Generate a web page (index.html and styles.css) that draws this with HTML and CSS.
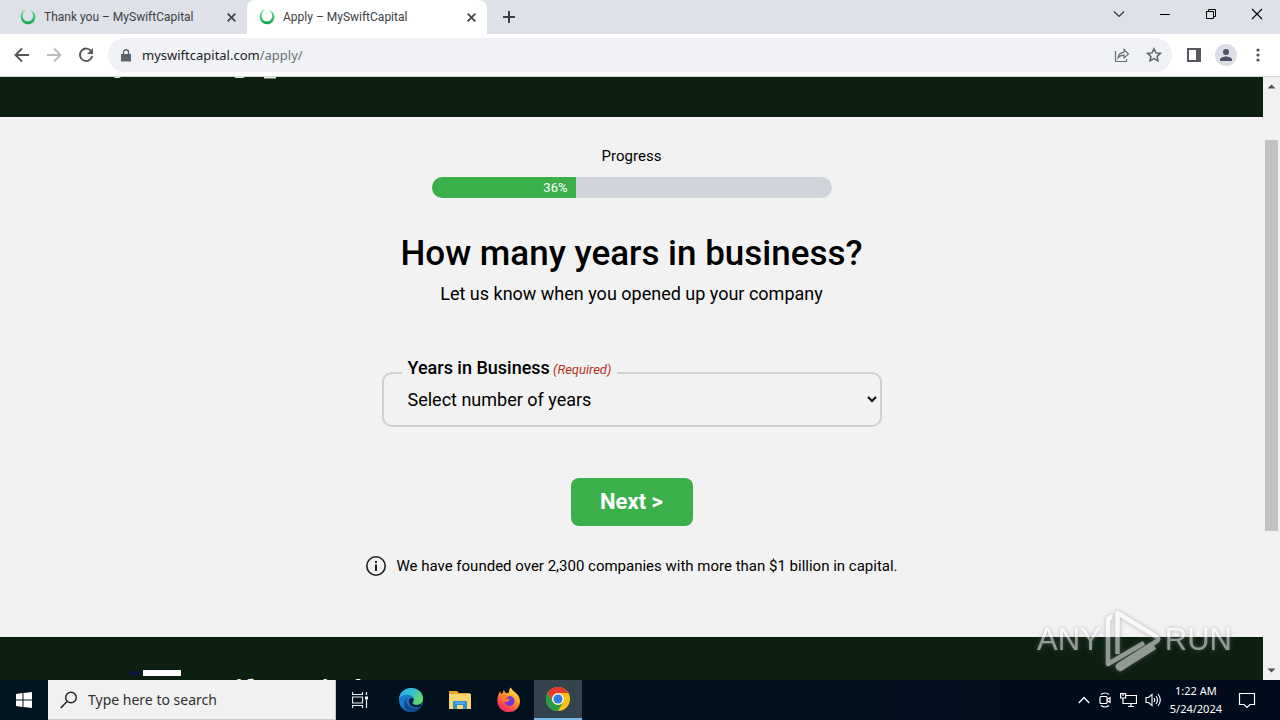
FILE: index.html
```html
<!DOCTYPE html>
<html lang="en">
<head>
<meta charset="utf-8">
<title>Apply – MySwiftCapital</title>
<link rel="stylesheet" href="styles.css">
</head>
<body>
<svg class="defs" aria-hidden="true">
  <defs>
    <linearGradient id="ringFill" x1="0" y1="0" x2="0" y2="1"><stop offset="0" stop-color="#5be58c"/><stop offset="1" stop-color="#17a650"/></linearGradient>
    <symbol id="ring" viewBox="0 0 16 16"><path fill="url(#ringFill)" d="M6 .8C2.800 1.400.6 4.400.7 8c.2 4.200 3.300 7.200 7.300 7.200 4.200 0 7.400-3.200 7.400-7.300 0-3.400-2.200-6.200-5.600-7 2.300 1.600 3.600 3.800 3.400 6.400-.3 3-2.500 5-5.300 5-3 0-5.100-2-5.300-4.800C2.400 4.700 3.600 2.300 6 .8z"/></symbol>
    <symbol id="x" viewBox="0 0 10 10"><path d="M1.500 1.500l7 7M8.500 1.500l-7 7" stroke="#45494d" stroke-width="1.700"/></symbol>
  </defs>
</svg>

<header class="tabstrip">
  <div class="tab">
    <svg class="favicon"><use href="#ring"/></svg>
    <span class="tab-title">Thank you – MySwiftCapital</span>
    <button class="tab-close" aria-label="Close tab"><svg><use href="#x"/></svg></button>
  </div>
  <div class="tab tab-active">
    <svg class="favicon"><use href="#ring"/></svg>
    <span class="tab-title">Apply – MySwiftCapital</span>
    <button class="tab-close" aria-label="Close tab"><svg><use href="#x"/></svg></button>
  </div>
  <button class="new-tab" aria-label="New tab"><svg width="14" height="14" viewBox="0 0 14 14"><path d="M7 1v12M1 7h12" stroke="#3c4043" stroke-width="2"/></svg></button>
  <div class="window-controls">
    <button aria-label="Search tabs"><svg width="12" height="12" viewBox="0 0 12 12"><path d="M1 3.500l5 5 5-5" fill="none" stroke="#333" stroke-width="1.200"/></svg></button>
    <button aria-label="Minimize"><svg width="12" height="12" viewBox="0 0 12 12"><path d="M1 6.500h10" stroke="#000"/></svg></button>
    <button aria-label="Restore"><svg width="12" height="12" viewBox="0 0 12 12"><path d="M1.500 3.500h7v7h-7zM3.500 3.500v-2h7v7h-2" fill="none" stroke="#000"/></svg></button>
    <button aria-label="Close window"><svg width="12" height="12" viewBox="0 0 12 12"><path d="M1 1l10 10M11 1L1 11" stroke="#000" stroke-width="1.100"/></svg></button>
  </div>
</header>

<nav class="toolbar" aria-label="Browser">
  <button class="tool" aria-label="Back"><svg width="16" height="16" viewBox="0 0 16 16"><path d="M15 8H2M8 1.500L1.500 8 8 14.500" fill="none" stroke="#55595e" stroke-width="1.900"/></svg></button>
  <button class="tool" aria-label="Forward"><svg width="16" height="16" viewBox="0 0 16 16"><path d="M1 8h13M8 1.500L14.500 8 8 14.500" fill="none" stroke="#b9bbbe" stroke-width="1.900"/></svg></button>
  <button class="tool" aria-label="Reload"><svg width="16" height="16" viewBox="0 0 16 16"><path d="M13.400 4.500A6.200 6.200 0 1 0 14.200 9" fill="none" stroke="#55595e" stroke-width="1.900"/><path d="M15 1v6H9z" fill="#55595e"/></svg></button>
  <div class="omnibox">
    <svg width="10" height="13" viewBox="0 0 10 13"><path d="M0 5h10v7.500H0z" fill="#5f6368"/><path d="M2.500 5V3.200a2.500 2.500 0 0 1 5 0V5" fill="none" stroke="#5f6368" stroke-width="1.400"/></svg>
    <div class="url">myswiftcapital.com<span>/apply/</span></div>
    <button class="tool" aria-label="Share"><svg width="16" height="16" viewBox="0 0 16 16"><path d="M1.500 4v10.500h11V12M4 11c.4-4 2.300-5.500 6-5.700V2.500L14.500 7 10 11V8.200C7.300 8.200 5.500 9 4 11z" fill="none" stroke="#6c7075" stroke-width="1.200"/></svg></button>
    <button class="tool" aria-label="Bookmark"><svg width="16" height="16" viewBox="0 0 16 16"><path d="M8 1.800l1.900 4.100 4.500.5-3.300 3 .9 4.400L8 11.600l-4 2.200.9-4.400-3.300-3 4.500-.5z" fill="none" stroke="#5f6368" stroke-width="1.500"/></svg></button>
  </div>
  <div class="actions">
    <button class="tool" aria-label="Side panel"><svg width="14" height="14" viewBox="0 0 14 14"><path d="M0 0h14v14H0z" fill="#55595e"/><path d="M2 2h7v10H2z" fill="#fff"/></svg></button>
    <button class="tool" aria-label="Profile"><svg width="22" height="22" viewBox="0 0 22 22"><circle cx="11" cy="11" r="11" fill="#dcdee5"/><circle cx="11" cy="8" r="3" fill="#4d5367"/><path d="M5 17v-1.500C5 13.400 9 12.400 11 12.400s6 1 6 3.100V17z" fill="#4d5367"/></svg></button>
    <button class="tool" aria-label="Menu"><svg width="4" height="14" viewBox="0 0 4 14"><g fill="#4d5156"><circle cx="2" cy="2" r="1.600"/><circle cx="2" cy="7" r="1.600"/><circle cx="2" cy="12" r="1.600"/></g></svg></button>
  </div>
</nav>

<div class="viewport">
  <div class="page">
    <div class="site-header">
      <svg width="170" height="2" viewBox="0 0 170 2"><path d="M1 0h7L6 1H2zM121 0h11l-2 1h-7zM151 0h12v1.500h-12z" fill="#dfe6e0"/></svg>
    </div>
    <main class="content">
      <form class="form">
        <p class="progress-label" id="progress-label">Progress</p>
        <div class="progress" role="progressbar" aria-labelledby="progress-label" aria-valuenow="36"><div class="progress-fill" style="width:36%">36%</div></div>
        <h1 class="title">How many years in business?</h1>
        <p class="subtitle">Let us know when you opened up your company</p>
        <fieldset class="field">
          <legend><label for="years">Years in Business</label><em> (Required)</em></legend>
          <select id="years"><option>Select number of years</option></select>
        </fieldset>
        <button class="next" type="button">Next &gt;</button>
        <p class="note">
          <svg width="22" height="22" viewBox="0 0 22 22"><circle cx="11" cy="11" r="9.200" fill="none" stroke="#1c1e24" stroke-width="1.600"/><path d="M10 9.500h2V16h-2zM10 6h2v2h-2z" fill="#1c1e24"/></svg>
          We have founded over 2,300 companies with more than $1 billion in capital.
        </p>
      </form>
    </main>
    <footer class="site-footer">
      <svg class="logo-bar" width="56" height="6" viewBox="0 0 56 6"><path d="M0 3l6-2 8 1v3H2z" fill="#0b1740"/><path d="M16 0h38v6H16z" fill="#fff"/></svg>
      <div class="logo-text">My Swift Capital</div>
    </footer>
  </div>
  <div class="scrollbar" aria-hidden="true">
    <svg width="9" height="5" viewBox="0 0 9 5"><path d="M0.500 4.500L4.500.5l4 4z" fill="#505050"/></svg>
    <div class="track"><div class="thumb"></div></div>
    <svg width="9" height="5" viewBox="0 0 9 5"><path d="M0.500.5l4 4 4-4z" fill="#505050"/></svg>
  </div>
  <div class="watermark" aria-hidden="true">
    <span>ANY</span>
    <svg width="56" height="64" viewBox="0 0 56 64"><g fill="none" stroke="#fff" stroke-width="4.500" stroke-linejoin="round"><path d="M7.500 9Q3 9 3 14v42L39 35"/><path d="M12.500 46V5L52 29q2.500 2 0 4L14 57q-3 2 1 4L50 39"/></g></svg>
    <span>RUN</span>
  </div>
</div>

<div class="taskbar">
  <button class="start" aria-label="Start"><svg width="16" height="16" viewBox="0 0 16 16"><path d="M0 2l6.500-1v6.500H0zM7.500.9L16 0v7.500H7.500zM0 8.500h6.500V15L0 14zM7.500 8.500H16V16l-8.500-.9z" fill="#fff"/></svg></button>
  <label class="search">
    <svg width="18" height="18" viewBox="0 0 18 18"><circle cx="11" cy="6.500" r="5.300" fill="none" stroke="#222" stroke-width="1.400"/><path d="M7 10.500L.8 17" stroke="#222" stroke-width="1.500"/></svg>
    <input type="text" placeholder="Type here to search" aria-label="Type here to search">
  </label>
  <button class="app task-view" aria-label="Task view"><svg width="16" height="16" viewBox="0 0 16 16"><path d="M.5 0v2.500h10V0M.5 16v-2.500h10V16M.5 5h10v6H.5zM14.500 0v3M14.500 8v8" fill="none" stroke="#e8eef2" stroke-width="1.200"/><path d="M13 4.500h3v3h-3z" fill="#fff"/></svg></button>
  <button class="app" aria-label="Edge"><svg width="26" height="26" viewBox="0 0 26 26"><defs><linearGradient id="eg" x1="0" y1="0" x2="1" y2=".5"><stop offset="0" stop-color="#27a9e8"/><stop offset=".55" stop-color="#35c3cf"/><stop offset="1" stop-color="#65d768"/></linearGradient></defs><circle cx="13" cy="13" r="12" fill="#1879cd"/><path d="M1 12C1.500 5 7 1 13 1c7 0 12 4.500 12 10.500 0 4-3 6.500-6.500 6.500-2.500 0-4-1-4-2 0-.8 1.200-1.400 1.200-3.500 0-2.800-3-4.700-6.500-4.700C5 7.800 2 9.500 1 12z" fill="url(#eg)"/><path d="M9.500 10.500c-2 3-.5 8 4 10 3.500 1.500 7 .5 9.500-1.300C20.500 23 17 25 13.500 25 7 25 5 18.500 6.500 14.500c.7-2 1.500-3.200 3-4z" fill="#114a8f"/><path d="M14.500 16c0 1 1.500 2 4 2 2 0 3.800-.7 5-2l-.5 3.200c-3 1.500-6.500 1.500-8.800.3C11 18 10 14 12 11.500c2-1 3.700-.5 3.700 1 0 2.100-1.200 2.700-1.200 3.500z" fill="#07213c"/></svg></button>
  <button class="app" aria-label="File Explorer"><svg width="24" height="20" viewBox="0 0 24 20"><path d="M1 1h8l2 2h11v3H1z" fill="#e8a52b"/><path d="M1 4h22v15H1z" fill="#fbd670"/><path d="M5 11h14v8h-4v-4H9v4H5z" fill="#2f8fd3"/><path d="M7 13h10" stroke="#72bdec" stroke-width="1"/></svg></button>
  <button class="app" aria-label="Firefox"><svg width="26" height="26" viewBox="0 0 26 26"><defs><linearGradient id="ff" x1=".8" y1="0" x2=".2" y2="1"><stop offset="0" stop-color="#fff04d"/><stop offset=".4" stop-color="#ff9a26"/><stop offset=".8" stop-color="#fb3d50"/><stop offset="1" stop-color="#e0257c"/></linearGradient></defs><path d="M4 4l1 3 2-1.500.5-2.500 2.500 3.200 3-.7c-.3-2 .5-4 2-5 .5 3 5 4.500 7.500 8.500 4 7-.5 16-9.500 16S-.5 17 2 9c.4-1.700 1.200-3.500 2-5z" fill="url(#ff)"/><circle cx="13.500" cy="14" r="5" fill="#7137d9"/><path d="M6 9c3-1.500 5-.5 7 1-1 .2-2 .7-3 1.800 3-.2 4 .7 4 .7s-1 2.500-4 2.500c-3.500 0-4.500-3.500-4-6z" fill="#ff7a2d"/></svg></button>
  <button class="app app-active" aria-label="Chrome"><svg width="24" height="24" viewBox="0 0 24 24"><circle cx="12" cy="12" r="12" fill="#fbc116"/><path d="M1.600 6A12 12 0 0 1 22.400 6H12a6 6 0 0 0-5.200 9z" fill="#e33b2e"/><path d="M1.600 6l5.200 9A6 6 0 0 0 17.200 15L12 24A12 12 0 0 1 1.600 6z" fill="#269b4a"/><circle cx="12" cy="12" r="5.800" fill="#fff"/><circle cx="12" cy="12" r="4.600" fill="#2f7de9"/></svg></button>
  <div class="tray">
    <svg width="12" height="8" viewBox="0 0 12 8"><path d="M.8 7L6 1.500 11.200 7" fill="none" stroke="#fff" stroke-width="1.300"/></svg>
    <svg width="14" height="16" viewBox="0 0 14 16"><g fill="none" stroke="#fff" stroke-width="1.200"><rect x="2" y="4.500" width="7" height="7" rx="1"/><path d="M9 7.500l3-2v5l-3-2M3 2.500q4-3 8 0M3 13.500q4 3 8 0"/></g></svg>
    <svg width="17" height="16" viewBox="0 0 17 16"><g fill="none" stroke="#fff" stroke-width="1.200"><path d="M5.500 3.500h11v8h-11M8 14.500h6M11 11.500v3M3 6v5.500h3M.6 1.500h5V6h-5zM3 1.500V4"/></g></svg>
    <svg width="17" height="16" viewBox="0 0 17 16"><g fill="none" stroke="#fff" stroke-width="1.100"><path d="M1 5.500h2.500L7 2.500v11l-3.500-3H1zM9 6q1.500 2 0 4M11 4q3 4 0 8M13 2q4.600 6 0 12"/></g></svg>
    <div class="clock"><span>1:22 AM</span><span>5/24/2024</span></div>
    <svg class="notify" width="18" height="18" viewBox="0 0 18 18"><path d="M1.500 2.500h15v11H12l-3 3-3-3H1.500z" fill="none" stroke="#fff" stroke-width="1.200"/></svg>
  </div>
</div>
</body>
</html>
```
FILE: styles.css
```css
* { box-sizing: border-box; }

body {
  margin: 0;
  height: 100vh;
  display: flex;
  flex-direction: column;
  overflow: hidden;
  font-family: Roboto, sans-serif;
  color: #000;
}

p, h1 { margin: 0; }
svg { display: block; flex: none; }
button { padding: 0; border: 0; background: none; display: flex; align-items: center; justify-content: center; }
.defs { position: absolute; width: 0; height: 0; }

/* Browser tabs */
.tabstrip {
  flex: none;
  height: 34px;
  display: flex;
  align-items: stretch;
  background: #dee1e8;
  font: 12px Roboto, sans-serif;
  color: #3c4043;
}
.tab {
  flex: 0 1 240px;
  display: flex;
  align-items: center;
  gap: 8px;
  padding: 0 10px 0 12px;
}
.tab:first-child { flex-basis: 247px; padding-left: 20px; }
.tab-active { background: #fff; border-radius: 8px 8px 0 0; }
.favicon { width: 16px; height: 16px; }
.tab-title { flex: 1; white-space: nowrap; }
.tab-close svg { width: 11px; height: 11px; }
.new-tab { width: 44px; }
.window-controls { margin-left: auto; display: flex; padding-bottom: 6px; }
.window-controls button { width: 46px; }

/* Toolbar */
.toolbar {
  flex: none;
  height: 43px;
  display: flex;
  align-items: center;
  padding: 0 6px;
  background: #fff;
  border-bottom: 1px solid #d5dad7;
}
.tool { width: 32px; height: 32px; }
.omnibox {
  flex: 1;
  height: 34px;
  margin-left: 6px;
  padding: 0 2px 0 13px;
  display: flex;
  align-items: center;
  border-radius: 17px;
  background: #f0f2f5;
}
.url {
  flex: 1;
  margin-left: 11px;
  font: 13px "Noto Sans", sans-serif;
  color: #202124;
}
.url span { color: #6b6f74; }
.actions { display: flex; margin-left: 6px; }

/* Page */
.viewport { position: relative; flex: 1; min-height: 0; display: flex; }
.page { flex: 1; display: flex; flex-direction: column; overflow: hidden; background: #f2f2f2; }
.site-header { flex: none; height: 40px; padding-left: 113px; background: #0c2012; }
.content { flex: none; min-height: 520px; padding: 28px 24px 56px; }
.form { display: flex; flex-direction: column; align-items: center; text-align: center; }
.progress-label { font-size: 15px; line-height: 22px; }
.progress {
  width: 400px;
  max-width: 100%;
  height: 21px;
  margin-top: 10px;
  border-radius: 11px;
  overflow: hidden;
  background: #d2d4dc;
}
.progress-fill {
  height: 100%;
  padding-right: 8px;
  background: #3bb04a;
  color: #fff;
  font-size: 13px;
  line-height: 21px;
  text-align: right;
}
.title { margin-top: 34px; font-size: 35px; font-weight: 500; line-height: 44px; }
.subtitle { margin-top: 6px; font-size: 18px; line-height: 24px; }
.field {
  width: 500px;
  max-width: 100%;
  min-width: 0;
  margin: 52px 0 0;
  padding: 0 0 15px;
  border: 2px solid #d0d0d2;
  border-radius: 10px;
  text-align: left;
}
.field legend {
  margin-left: 18px;
  padding: 0 6px 8px;
  font-size: 18px;
  font-weight: 500;
  line-height: 20px;
}
.field em { color: #b5351c; font-size: 13px; font-weight: 400; }
.field select {
  display: block;
  width: 100%;
  height: 22px;
  padding: 0 0 0 20px;
  border: 0;
  background: transparent;
  color: #000;
  font: 18px/22px Roboto, sans-serif;
}
.next {
  min-width: 122px;
  height: 48px;
  margin-top: 51px;
  padding: 0 24px 2px;
  border-radius: 8px;
  background: #3bb04a;
  color: #fff;
  font: 700 22px Roboto, sans-serif;
}
.note { display: flex; align-items: center; gap: 9px; margin-top: 28px; font-size: 15px; line-height: 24px; }

.site-footer { flex: 1; min-height: 0; overflow: hidden; padding: 33px 0 0 127px; background: #0c2012; }
.logo-text {
  padding-left: 22px;
  color: #fff;
  font-size: 29px;
  font-weight: 700;
  line-height: 30px;
  white-space: nowrap;
}

.scrollbar {
  flex: none;
  width: 17px;
  padding: 7px 0;
  display: flex;
  flex-direction: column;
  align-items: center;
  background: #f1f1f1;
}
.track { flex: 1; align-self: stretch; padding: 51px 2px 0; }
.thumb { height: 74%; background: #c1c1c1; }

.watermark {
  position: absolute;
  right: 48px;
  bottom: 8px;
  display: flex;
  align-items: center;
  gap: 4px;
  opacity: .55;
  filter: drop-shadow(0 0 2px #777);
  color: #fff;
  font: 31px "Liberation Sans Narrow", "Liberation Sans", sans-serif;
}

/* Taskbar */
.taskbar {
  flex: none;
  height: 40px;
  display: flex;
  background: linear-gradient(90deg, #00141f, #020b1b);
  font-family: "Noto Sans", sans-serif;
}
.start { width: 48px; }
.search {
  width: 288px;
  display: flex;
  align-items: center;
  gap: 10px;
  padding: 0 12px;
  background: #f1f1f1;
  border: 1px solid #c5c8ca;
  border-width: 0 1px 1px 0;
}
.search input {
  flex: 1;
  min-width: 0;
  padding: 0;
  border: 0;
  background: none;
  font: 14px "Noto Sans", sans-serif;
}
.search input::placeholder { color: #303030; }
.app { width: 48px; margin-right: 1px; }
.task-view { margin-right: 3px; }
.app-active { background: #33444f; border-bottom: 2px solid #76b9ed; }
.tray { margin-left: auto; padding-right: 24px; display: flex; align-items: center; gap: 8px; }
.clock {
  display: flex;
  flex-direction: column;
  align-items: center;
  color: #fff;
  font-size: 11px;
  line-height: 18px;
}
.notify { margin-left: 8px; }
```
